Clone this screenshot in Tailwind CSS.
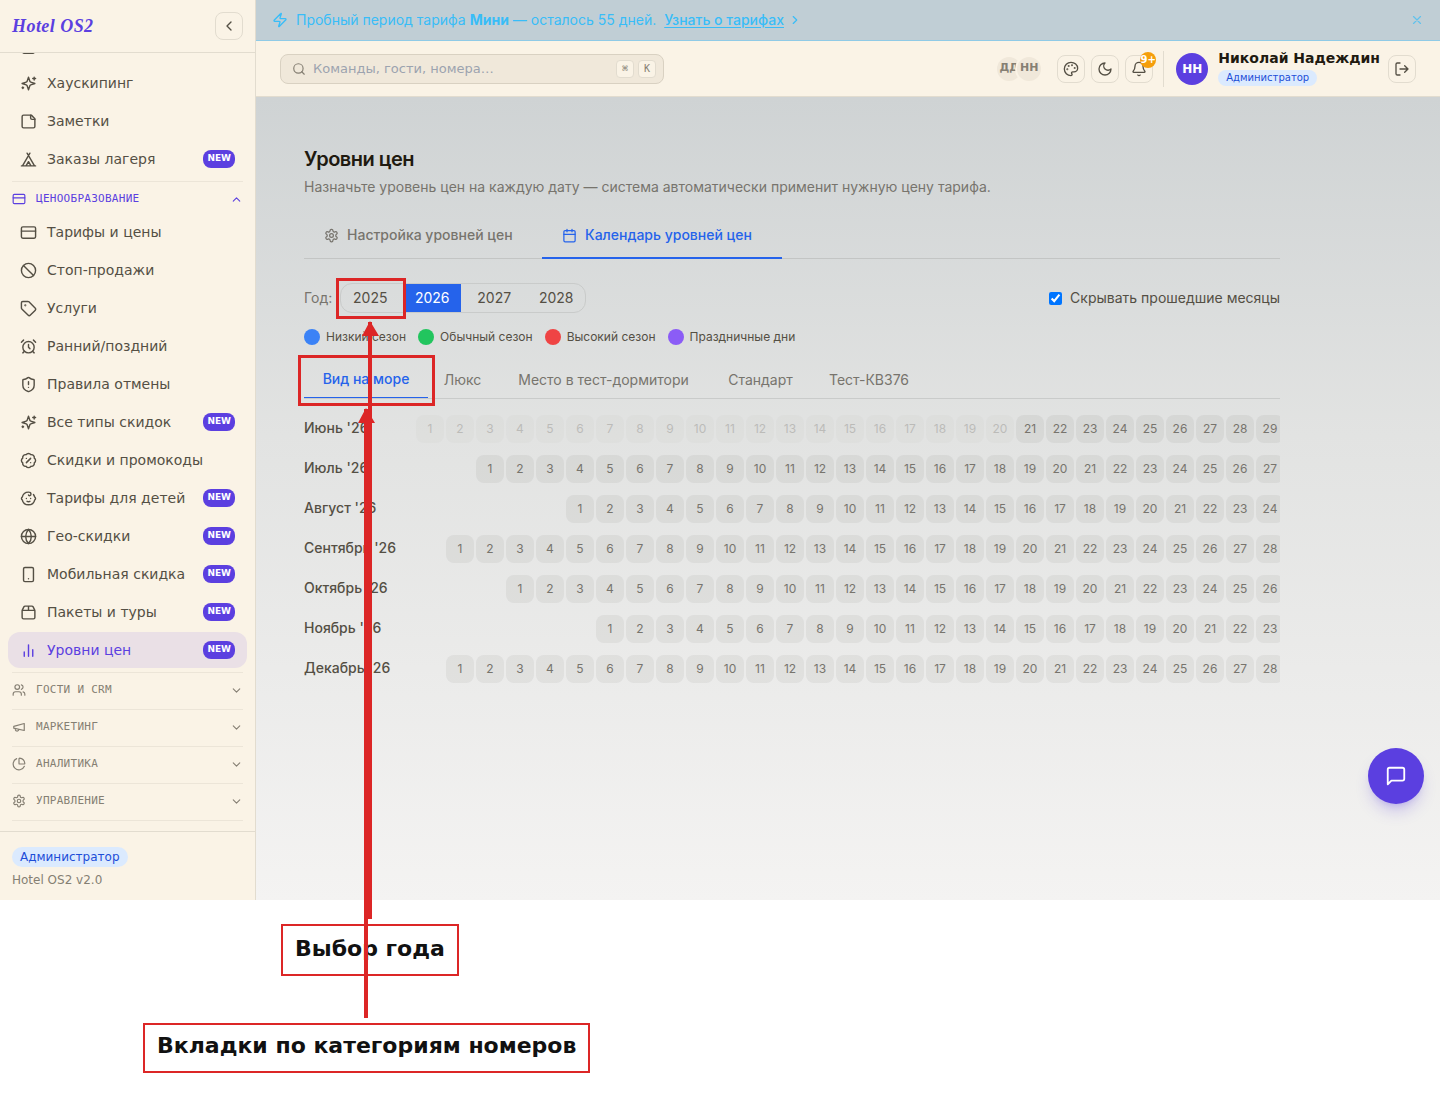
<!DOCTYPE html>
<html lang="ru">
<head>
  <meta charset="UTF-8" />
  <meta name="viewport" content="width=device-width, initial-scale=1" />
  <title>Hotel OS2 — Уровни цен</title>
  <script src="https://cdn.jsdelivr.net/npm/@tailwindcss/browser@4"></script>
</head>
<body class="relative min-h-screen bg-white pb-49 font-['DejaVu_Sans',sans-serif] text-[#544f44] [stroke-linecap:round] [stroke-linejoin:round]">

  <!-- иконки -->
  <svg class="hidden">
    <symbol id="i-left" viewBox="0 0 24 24"><path d="m15 18-6-6 6-6"/></symbol>
    <symbol id="i-right" viewBox="0 0 24 24"><path d="m9 18 6-6-6-6"/></symbol>
    <symbol id="i-down" viewBox="0 0 24 24"><path d="m6 9 6 6 6-6"/></symbol>
    <symbol id="i-up" viewBox="0 0 24 24"><path d="m18 15-6-6-6 6"/></symbol>
    <symbol id="i-x" viewBox="0 0 24 24"><path d="M18 6 6 18M6 6l12 12"/></symbol>
    <symbol id="i-list" viewBox="0 0 24 24"><rect x="4" y="3" width="16" height="20" rx="2"/><path d="M9 9h6M9 14h6"/></symbol>
    <symbol id="i-sparkles" viewBox="0 0 24 24"><path d="m12 3-1.900 5.800a2 2 0 0 1-1.300 1.300L3 12l5.800 1.900a2 2 0 0 1 1.300 1.300L12 21l1.900-5.800a2 2 0 0 1 1.300-1.300L21 12l-5.800-1.900a2 2 0 0 1-1.300-1.300Z"/><path d="M20 3v4M22 5h-4M4 17v2M5 18H3"/></symbol>
    <symbol id="i-note" viewBox="0 0 24 24"><path d="M16 3H5a2 2 0 0 0-2 2v14a2 2 0 0 0 2 2h14a2 2 0 0 0 2-2V8Z"/><path d="M15 3v4a2 2 0 0 0 2 2h4"/></symbol>
    <symbol id="i-tent" viewBox="0 0 24 24"><path d="M3.500 21 14 3M20.500 21 10 3M15.500 21 12 15l-3.500 6M2 21h20"/></symbol>
    <symbol id="i-card" viewBox="0 0 24 24"><rect x="2" y="4" width="20" height="16" rx="2"/><path d="M2 10h20"/></symbol>
    <symbol id="i-ban" viewBox="0 0 24 24"><circle cx="12" cy="12" r="10"/><path d="m4.900 4.900 14.200 14.200"/></symbol>
    <symbol id="i-tag" viewBox="0 0 24 24"><path d="M12.586 2.586A2 2 0 0 0 11.172 2H4a2 2 0 0 0-2 2v7.172a2 2 0 0 0 .586 1.414l8.704 8.704a2.426 2.426 0 0 0 3.420 0l6.580-6.580a2.426 2.426 0 0 0 0-3.420z"/><circle cx="7.500" cy="7.500" r=".5" fill="currentColor"/></symbol>
    <symbol id="i-alarm" viewBox="0 0 24 24"><circle cx="12" cy="13" r="8"/><path d="M12 9v4l2 2M5 3 2 6M22 6l-3-3M6.380 18.700 4 21M17.640 18.670 20 21"/></symbol>
    <symbol id="i-shield" viewBox="0 0 24 24"><path d="M20 13c0 5-3.500 7.500-7.660 8.950a1 1 0 0 1-.67-.01C7.500 20.500 4 18 4 13V6a1 1 0 0 1 1-1c2 0 4.500-1.200 6.240-2.720a1.170 1.170 0 0 1 1.520 0C14.510 3.810 17 5 19 5a1 1 0 0 1 1 1z"/><path d="M12 8v4M12 16h.01"/></symbol>
    <symbol id="i-percent" viewBox="0 0 24 24"><path d="M3.850 8.620a4 4 0 0 1 4.780-4.770 4 4 0 0 1 6.740 0 4 4 0 0 1 4.780 4.780 4 4 0 0 1 0 6.740 4 4 0 0 1-4.770 4.780 4 4 0 0 1-6.750 0 4 4 0 0 1-4.780-4.770 4 4 0 0 1 0-6.760Z"/><path d="m15 9-6 6M9 9h.01M15 15h.01"/></symbol>
    <symbol id="i-baby" viewBox="0 0 24 24"><path d="M9 12h.01M15 12h.01M10 16c.5.3 1.200.5 2 .5s1.500-.2 2-.5"/><path d="M19 6.300a9 9 0 0 1 1.800 3.900 2 2 0 0 1 0 3.600 9 9 0 0 1-17.600 0 2 2 0 0 1 0-3.600A9 9 0 0 1 12 3c2 0 3.500 1.100 3.500 2.500s-.9 2.500-2 2.500c-.8 0-1.500-.4-1.500-1"/></symbol>
    <symbol id="i-globe" viewBox="0 0 24 24"><circle cx="12" cy="12" r="10"/><path d="M12 2a14.500 14.500 0 0 0 0 20 14.500 14.500 0 0 0 0-20M2 12h20"/></symbol>
    <symbol id="i-phone" viewBox="0 0 24 24"><rect x="5" y="2" width="14" height="20" rx="2"/><path d="M12 18h.01"/></symbol>
    <symbol id="i-package" viewBox="0 0 24 24"><path d="M12 3v6M16.760 3a2 2 0 0 1 1.800 1.100l2.230 4.480a2 2 0 0 1 .21.890V19a2 2 0 0 1-2 2H5a2 2 0 0 1-2-2V9.470a2 2 0 0 1 .21-.89L5.450 4.100A2 2 0 0 1 7.240 3zM3.050 9.010h17.890"/></symbol>
    <symbol id="i-bars" viewBox="0 0 24 24"><path d="M6 20v-6M12 20V4M18 20v-9" /></symbol>
    <symbol id="i-users" viewBox="0 0 24 24"><path d="M16 21v-2a4 4 0 0 0-4-4H6a4 4 0 0 0-4 4v2M22 21v-2a4 4 0 0 0-3-3.870M16 3.130a4 4 0 0 1 0 7.750"/><circle cx="9" cy="7" r="4"/></symbol>
    <symbol id="i-mega" viewBox="0 0 24 24"><path d="m3 11 18-5v12L3 14zM11.600 16.800a3 3 0 1 1-5.800-1.600"/></symbol>
    <symbol id="i-pie" viewBox="0 0 24 24"><path d="M21 12c.55 0 1-.45.950-1a10 10 0 0 0-8.950-8.950c-.55-.06-1 .4-1 .950v8a1 1 0 0 0 1 1z"/><path d="M21.210 15.890A10 10 0 1 1 8 2.830"/></symbol>
    <symbol id="i-gear" viewBox="0 0 24 24"><path d="M12.220 2h-.44a2 2 0 0 0-2 2v.18a2 2 0 0 1-1 1.730l-.43.250a2 2 0 0 1-2 0l-.15-.08a2 2 0 0 0-2.730.730l-.22.380a2 2 0 0 0 .730 2.730l.150.100a2 2 0 0 1 1 1.720v.510a2 2 0 0 1-1 1.740l-.15.090a2 2 0 0 0-.73 2.730l.220.380a2 2 0 0 0 2.730.730l.150-.08a2 2 0 0 1 2 0l.430.250a2 2 0 0 1 1 1.730V20a2 2 0 0 0 2 2h.440a2 2 0 0 0 2-2v-.18a2 2 0 0 1 1-1.730l.430-.25a2 2 0 0 1 2 0l.150.080a2 2 0 0 0 2.730-.73l.220-.39a2 2 0 0 0-.73-2.730l-.15-.08a2 2 0 0 1-1-1.740v-.5a2 2 0 0 1 1-1.740l.150-.09a2 2 0 0 0 .730-2.730l-.22-.38a2 2 0 0 0-2.730-.73l-.15.080a2 2 0 0 1-2 0l-.43-.25a2 2 0 0 1-1-1.730V4a2 2 0 0 0-2-2z"/><circle cx="12" cy="12" r="3"/></symbol>
    <symbol id="i-zap" viewBox="0 0 24 24"><path d="M4 14a1 1 0 0 1-.78-1.630l9.900-10.200a.5.5 0 0 1 .86.460l-1.920 6.020A1 1 0 0 0 13 10h7a1 1 0 0 1 .78 1.630l-9.900 10.200a.5.5 0 0 1-.86-.46l1.920-6.020A1 1 0 0 0 11 14z"/></symbol>
    <symbol id="i-search" viewBox="0 0 24 24"><circle cx="11" cy="11" r="8"/><path d="m21 21-4.300-4.300"/></symbol>
    <symbol id="i-palette" viewBox="0 0 24 24"><circle cx="13.500" cy="6.500" r=".5" fill="currentColor"/><circle cx="17.500" cy="10.500" r=".5" fill="currentColor"/><circle cx="8.500" cy="7.500" r=".5" fill="currentColor"/><circle cx="6.500" cy="12.500" r=".5" fill="currentColor"/><path d="M12 2C6.500 2 2 6.500 2 12s4.500 10 10 10c.926 0 1.648-.746 1.648-1.688 0-.437-.18-.835-.437-1.125-.29-.289-.438-.652-.438-1.125a1.640 1.640 0 0 1 1.668-1.668h1.996c3.051 0 5.555-2.503 5.555-5.554C21.965 6.012 17.461 2 12 2z"/></symbol>
    <symbol id="i-moon" viewBox="0 0 24 24"><path d="M12 3a6 6 0 0 0 9 9 9 9 0 1 1-9-9"/></symbol>
    <symbol id="i-bell" viewBox="0 0 24 24"><path d="M10.270 21a2 2 0 0 0 3.460 0M3.260 15.330A1 1 0 0 0 4 17h16a1 1 0 0 0 .740-1.670C19.410 13.960 18 12.500 18 8A6 6 0 0 0 6 8c0 4.500-1.410 5.960-2.740 7.330"/></symbol>
    <symbol id="i-logout" viewBox="0 0 24 24"><path d="M9 21H5a2 2 0 0 1-2-2V5a2 2 0 0 1 2-2h4M16 17l5-5-5-5M21 12H9"/></symbol>
    <symbol id="i-calendar" viewBox="0 0 24 24"><path d="M8 2v4M16 2v4M3 10h18"/><rect x="3" y="4" width="18" height="18" rx="2"/></symbol>
    <symbol id="i-chat" viewBox="0 0 24 24"><path d="M21 15a2 2 0 0 1-2 2H7l-4 4V5a2 2 0 0 1 2-2h14a2 2 0 0 1 2 2z"/></symbol>
  </svg>

  <div class="flex h-[900px]">
    <!-- боковое меню -->
    <aside class="flex w-64 shrink-0 flex-col border-r border-[#e2dccf] bg-[#faf3e6]">
      <div class="flex h-[53px] shrink-0 items-center justify-between border-b border-[#e2dccf] px-3">
        <a href="#" class="font-['Liberation_Serif',serif] text-lg font-bold tracking-wide italic text-[#5b3fe0]">Hotel OS2</a>
        <button type="button" aria-label="Свернуть меню" class="flex size-7 items-center justify-center rounded-lg border border-[#e2dccf]">
          <svg class="size-4 fill-none stroke-current stroke-2"><use href="#i-left"/></svg>
        </button>
      </div>

      <nav id="menu" class="flex min-h-0 flex-1 flex-col justify-end overflow-hidden px-2 pb-2.5"></nav>

      <div class="h-[69px] shrink-0 border-t border-[#e2dccf] px-3 pt-[15px] text-xs">
        <span class="inline-block rounded-full bg-[#dbeafe] px-2 py-0.5 text-[#1d4ed8]">Администратор</span>
        <p class="mt-[5px] text-[#857f73]">Hotel OS2 v2.0</p>
      </div>
    </aside>

    <div class="flex min-w-0 flex-1 flex-col font-[Inter,sans-serif]">
      <!-- баннер -->
      <div class="flex h-[41px] shrink-0 items-center gap-2 border-b border-[#8fcae6] bg-[#c0ced5] px-4 text-sm text-[#38bdf8]">
        <svg class="size-4 fill-none stroke-current stroke-2"><use href="#i-zap"/></svg>
        <p>Пробный период тарифа <b>Мини</b> — осталось 55 дней.</p>
        <a href="#" class="flex items-center gap-1 font-medium"><span class="underline underline-offset-2">Узнать о тарифах</span>
          <svg class="size-3.5 fill-none stroke-current stroke-2"><use href="#i-right"/></svg>
        </a>
        <button type="button" aria-label="Закрыть" class="ml-auto opacity-70">
          <svg class="size-3.5 fill-none stroke-current stroke-2"><use href="#i-x"/></svg>
        </button>
      </div>

      <!-- верхняя панель -->
      <header class="flex h-14 shrink-0 items-center border-b border-[#e2dccf] bg-[#faf3e6] px-6 font-['DejaVu_Sans',sans-serif]">
        <div class="flex h-[30px] w-96 items-center gap-1 rounded-lg border border-[#d9d1c2] bg-[#f0e8da] pr-[7px] pl-[11px]">
          <svg class="size-3.5 shrink-0 fill-none stroke-[#857f73] stroke-2"><use href="#i-search"/></svg>
          <input type="text" aria-label="Поиск" placeholder="Команды, гости, номера…" class="ml-[3px] min-w-0 flex-1 text-[13px] outline-none placeholder:text-[#9ca3af]">
          <kbd class="flex size-[18px] items-center justify-center rounded-sm border border-[#e2dccf] bg-[#faf3e6] font-['DejaVu_Sans_Mono',monospace] text-[10px] text-[#857f73]">⌘</kbd>
          <kbd class="flex size-[18px] items-center justify-center rounded-sm border border-[#e2dccf] bg-[#faf3e6] font-['DejaVu_Sans_Mono',monospace] text-[10px] text-[#857f73]">K</kbd>
        </div>

        <div class="ml-auto flex items-center">
          <div class="mr-4 flex -space-x-1 text-[11px] font-bold text-[#857f73]">
            <span class="flex size-6 items-center justify-center rounded-full bg-[#f0e8da]">ДД</span>
            <span class="flex size-6 items-center justify-center rounded-full bg-[#f0e8da] ring-2 ring-[#faf3e6]">НН</span>
          </div>
          <div class="flex gap-1.5">
            <button type="button" aria-label="Тема" class="flex size-7 items-center justify-center rounded-lg border border-[#e2dccf]">
              <svg class="size-4 fill-none stroke-current stroke-2"><use href="#i-palette"/></svg>
            </button>
            <button type="button" aria-label="Тёмный режим" class="flex size-7 items-center justify-center rounded-lg border border-[#e2dccf]">
              <svg class="size-4 fill-none stroke-current stroke-2"><use href="#i-moon"/></svg>
            </button>
            <button type="button" aria-label="Уведомления" class="relative flex size-7 items-center justify-center rounded-lg border border-[#e2dccf]">
              <svg class="size-4 fill-none stroke-current stroke-2"><use href="#i-bell"/></svg>
              <span class="absolute -top-1 -right-1 flex size-4 items-center justify-center rounded-full bg-[#f59e0b] text-[10px] font-bold text-white">9+</span>
            </button>
          </div>
          <div class="mr-3 ml-2.5 h-9 w-px bg-[#e2dccf]"></div>
          <span class="flex size-8 items-center justify-center rounded-full bg-[#5b3fe0] text-xs font-bold text-white">НН</span>
          <div class="mr-2 ml-2.5 pb-1">
            <p class="text-sm/5 font-bold text-[#1f1a10]">Николай Надеждин</p>
            <span class="mt-0.5 block w-fit rounded-full bg-[#dbeafe] px-2 text-[10px]/4 text-[#1d4ed8]">Администратор</span>
          </div>
          <button type="button" aria-label="Выйти" class="flex size-7 items-center justify-center rounded-lg border border-[#e2dccf]">
            <svg class="size-4 fill-none stroke-current stroke-2"><use href="#i-logout"/></svg>
          </button>
        </div>
      </header>

      <main class="min-h-0 flex-1 bg-linear-to-b from-[#cfd3d4] via-[#e2e3e2] via-42% to-[#f4f3f2] px-6 pt-12">
        <div class="max-w-[1024px] px-6 text-sm">
          <h1 class="text-xl/7 font-semibold tracking-tight text-[#1f1a10]">Уровни цен</h1>
          <p class="mt-1 text-[#77746d]">Назначьте уровень цен на каждую дату — система автоматически применит нужную цену тарифа.</p>

          <div class="mt-4 flex border-b border-[#c3c5c4] font-medium">
            <button type="button" class="-mb-px flex h-[46px] w-[238px] items-center gap-2 border-b-2 border-transparent px-5 text-[#77746d]">
              <svg class="size-[15px] fill-none stroke-current stroke-2"><use href="#i-gear"/></svg>Настройка уровней цен
            </button>
            <button type="button" class="-mb-px flex h-[46px] w-[240px] items-center gap-2 border-b-2 border-[#2563eb] px-5 text-[#2563eb]">
              <svg class="size-[15px] fill-none stroke-current stroke-2"><use href="#i-calendar"/></svg>Календарь уровней цен
            </button>
          </div>

          <div class="mt-6 flex items-center">
            <span class="text-[#77746d]">Год:</span>
            <div class="ml-2 flex h-[30px] gap-1 overflow-hidden rounded-xl border border-[#c9cbca]">
              <button type="button" class="w-[58px]">2025</button>
              <button type="button" class="w-[58px] bg-[#2563eb] text-white">2026</button>
              <button type="button" class="w-[58px]">2027</button>
              <button type="button" class="w-[58px]">2028</button>
            </div>
            <label class="ml-auto flex items-center gap-2">
              <input type="checkbox" checked class="size-[13px]">Скрывать прошедшие месяцы
            </label>
          </div>

          <div class="mt-4 flex gap-3 text-xs">
            <span class="flex items-center gap-1.5"><i class="size-4 rounded-full bg-[#3b82f6]"></i>Низкий сезон</span>
            <span class="flex items-center gap-1.5"><i class="size-4 rounded-full bg-[#22c55e]"></i>Обычный сезон</span>
            <span class="flex items-center gap-1.5"><i class="size-4 rounded-full bg-[#ef4444]"></i>Высокий сезон</span>
            <span class="flex items-center gap-1.5"><i class="size-4 rounded-full bg-[#8b5cf6]"></i>Праздничные дни</span>
          </div>

          <div class="mt-4 flex border-b border-[#c9cbca] text-[#77746d]">
            <button type="button" class="h-[37px] w-[124px] border-b border-[#2563eb] font-medium text-[#2563eb]">Вид на море</button>
            <button type="button" class="w-[69px]">Люкс</button>
            <button type="button" class="w-[213px]">Место в тест-дормитори</button>
            <button type="button" class="w-[101px]">Стандарт</button>
            <button type="button" class="w-[116px]">Тест-КВ376</button>
          </div>

          <div id="calendar" class="mt-4 flex flex-col gap-3 overflow-hidden"></div>
        </div>
      </main>
    </div>
  </div>

  <button type="button" aria-label="Чат" class="absolute top-[748px] right-4 flex size-14 items-center justify-center rounded-full bg-[#5b3fe0] text-white shadow-lg shadow-[#5b3fe0]/25">
    <svg class="size-[22px] fill-none stroke-current stroke-2"><use href="#i-chat"/></svg>
  </button>

  <!-- пояснения поверх страницы -->
  <div class="absolute top-[278px] left-[336px] h-[41px] w-[70px] border-3 border-[#dc2626]"></div>
  <div class="absolute top-[355px] left-[298px] h-[51px] w-[137px] border-3 border-[#dc2626]"></div>
  <p class="absolute top-[924px] left-[281px] h-[52px] border-2 border-[#dc2626] bg-white px-3 text-[22px]/[46px] font-bold text-[#111]">Выбор года</p>
  <p class="absolute top-[1023px] left-[143px] h-[50px] border-2 border-[#dc2626] bg-white px-3 text-[22px]/[42px] font-bold text-[#111]">Вкладки по категориям номеров</p>
  <svg class="pointer-events-none absolute top-0 left-0 h-[1096px] w-[600px] fill-[#dc2626]">
    <path d="M368 322h4v597h-4zM370 321l9 15h-17z"/>
    <path d="M364 409h4v609h-4zM366 408l9 15h-17z"/>
  </svg>

  <script>
    // у первого пункта видна только нижняя кромка иконки, подпись уходит под шапку
    const items = [
      { icon: "list", text: "" },
      { icon: "sparkles", text: "Хаускипинг" },
      { icon: "note", text: "Заметки" },
      { icon: "tent", text: "Заказы лагеря", isNew: true },
      { icon: "card", section: "Ценообразование", open: true },
      { icon: "card", text: "Тарифы и цены" },
      { icon: "ban", text: "Стоп-продажи" },
      { icon: "tag", text: "Услуги" },
      { icon: "alarm", text: "Ранний/поздний" },
      { icon: "shield", text: "Правила отмены" },
      { icon: "sparkles", text: "Все типы скидок", isNew: true },
      { icon: "percent", text: "Скидки и промокоды" },
      { icon: "baby", text: "Тарифы для детей", isNew: true },
      { icon: "globe", text: "Гео-скидки", isNew: true },
      { icon: "phone", text: "Мобильная скидка", isNew: true },
      { icon: "package", text: "Пакеты и туры", isNew: true },
      { icon: "bars", text: "Уровни цен", isNew: true, active: true },
      { icon: "users", section: "Гости и CRM" },
      { icon: "mega", section: "Маркетинг" },
      { icon: "pie", section: "Аналитика" },
      { icon: "gear", section: "Управление" }
    ];

    const badge = `<span class="ml-auto h-[18px] rounded-lg bg-[#5b3fe0] px-1 text-[9px]/4 font-bold text-white">NEW</span>`;

    document.getElementById("menu").innerHTML = items.map((item, i) => {
      if (item.section) {
        return `<div class="mx-1 mt-1 shrink-0 border-t border-[#ece5d8] pt-0.5">
          <button type="button" class="flex h-[30px] w-full items-center gap-2.5 font-['DejaVu_Sans_Mono',monospace] text-[11px] tracking-wide uppercase ${item.open ? "text-[#5b3fe0]" : "text-[#857f73]"}">
            <svg class="size-3.5 fill-none stroke-current stroke-2"><use href="#i-${item.icon}"/></svg>${item.section}
            <svg class="ml-auto size-[13px] fill-none stroke-current stroke-2"><use href="#i-${item.open ? "up" : "down"}"/></svg>
          </button>
        </div>`;
      }
      // первый пункт после заголовка идёт без отступа
      const gap = i > 0 && !items[i - 1].section ? "mt-0.5" : "";
      return `<a href="#" class="${gap} flex h-9 shrink-0 items-center gap-2.5 rounded-xl px-3 text-sm ${item.active ? "bg-[#eae0e6] text-[#5b3fe0]" : ""}">
        <svg class="size-[17px] fill-none stroke-current stroke-2"><use href="#i-${item.icon}"/></svg>${item.text}${item.isNew ? badge : ""}
      </a>`;
    }).join("") + `<div class="mx-1 mt-1 shrink-0 border-t border-[#ece5d8]"></div>`;

    // offset — день недели первого числа (0 = понедельник)
    const months = [
      { name: "Июнь '26", offset: 0, days: 30, past: 20 },
      { name: "Июль '26", offset: 2, days: 31, past: 0 },
      { name: "Август '26", offset: 5, days: 31, past: 0 },
      { name: "Сентябрь '26", offset: 1, days: 30, past: 0 },
      { name: "Октябрь '26", offset: 3, days: 31, past: 0 },
      { name: "Ноябрь '26", offset: 6, days: 30, past: 0 },
      { name: "Декабрь '26", offset: 1, days: 31, past: 0 }
    ];

    document.getElementById("calendar").innerHTML = months.map(m => {
      let cells = "";
      for (let i = 0; i < m.offset; i++) cells += `<span class="size-7 shrink-0"></span>`;
      for (let d = 1; d <= m.days; d++) {
        cells += `<button type="button" class="size-7 shrink-0 rounded-lg bg-[#1c1400]/5 text-xs text-[#77746d] ${d <= m.past ? "opacity-35" : ""}">${d}</button>`;
      }
      return `<div class="flex"><span class="w-28 shrink-0 pt-[3px] font-medium">${m.name}</span><div class="flex gap-0.5">${cells}</div></div>`;
    }).join("");
  </script>
</body>
</html>
